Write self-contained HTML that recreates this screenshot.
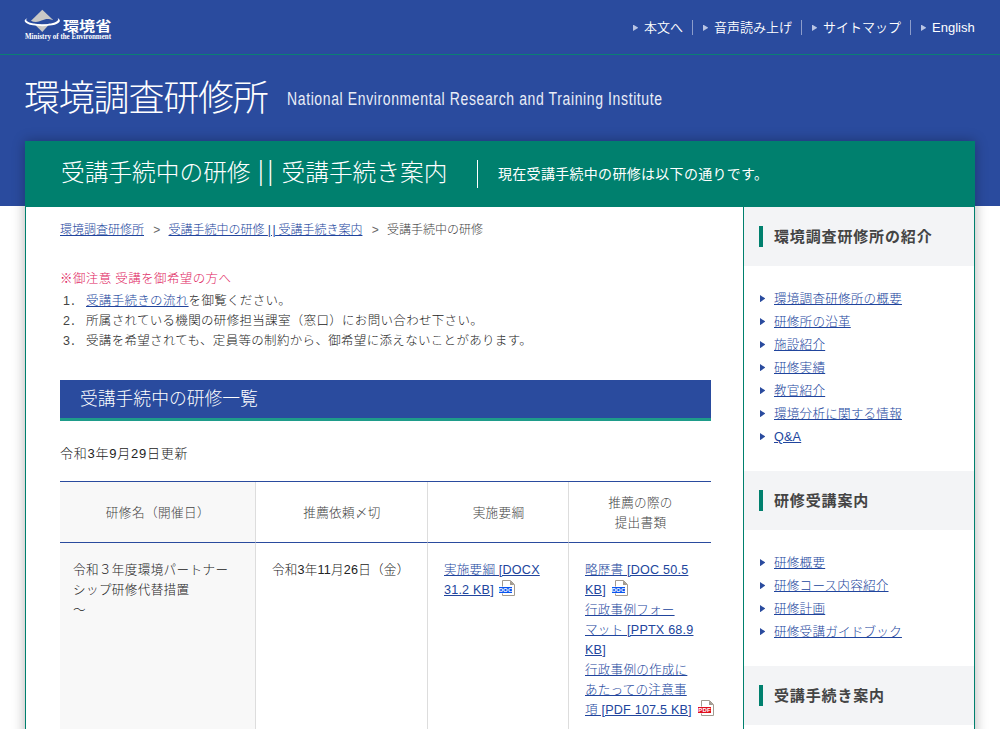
<!DOCTYPE html>
<html lang="ja">
<head>
<meta charset="utf-8">
<title>受講手続中の研修 || 受講手続き案内</title>
<style>
*{box-sizing:border-box;margin:0;padding:0}
html,body{width:1000px;height:729px;overflow:hidden}
body{font-family:"Liberation Sans","Noto Sans CJK JP",sans-serif;font-weight:300;color:#222;background:#fff;position:relative;font-size:13px}
a{color:#21459d;text-decoration:underline}
.abs{position:absolute}
#bluebg{left:0;top:0;width:1000px;height:206px;background:#2a4b9e}
#topline{left:0;top:54px;width:1000px;height:1px;background:#0b7f74}
#logo{left:20px;top:6px;width:50px;height:30px}
#logoj{left:63px;top:15px;font-size:13.2px;line-height:24px;font-weight:700;color:#fff;white-space:nowrap;transform-origin:0 50%;transform:scaleX(1.22)}
#logoe{left:25px;top:32px;font-size:8.2px;line-height:10px;font-weight:700;color:#fff;white-space:nowrap;transform-origin:0 50%;transform:scaleX(0.855);font-family:"Liberation Serif",serif}
#nav{left:0;top:0;width:1000px;height:54px;font-size:13px;color:#fff;white-space:nowrap;line-height:18px;font-weight:350}
#nav span.it{position:absolute;top:19px;padding-left:11px}
#nav span.it:before{content:"";position:absolute;left:0;top:5.5px;width:5.4px;height:6.6px;background:#b9c4e4;clip-path:polygon(0 0,100% 50%,0 100%)}
#nav span.sep{position:absolute;top:20px;width:1px;height:15px;background:#8c9dcb}
#title{left:24px;top:74px;font-size:36px;line-height:50px;color:#fff;font-weight:300;white-space:nowrap;letter-spacing:-1.2px}
#subtitle{left:287px;top:88px;font-size:17.5px;line-height:22px;color:#e9edf7;white-space:nowrap;transform-origin:0 50%;transform:scaleX(0.8);letter-spacing:0.77px;font-weight:400}
#wrap{left:25px;top:141px;width:950px;height:600px;background:#fff;border-left:1px solid #00806e;border-right:1px solid #00806e;box-shadow:0 0 12px rgba(0,0,0,0.3)}
#banner{left:26px;top:141px;width:948px;height:66px;background:#00806e}
#btitle{left:61px;top:155px;font-size:23.7px;line-height:36px;color:#fff;white-space:nowrap;font-weight:300}
#btitle .bars{display:inline-block;width:28.5px;text-align:center;letter-spacing:8.8px;font-size:27px;line-height:20px;transform:scaleX(0.6);margin-left:2px;margin-right:0.5px;white-space:nowrap;vertical-align:1px}
#bsep{left:477px;top:160px;width:1px;height:28px;background:#fff}
#bsub{left:498px;top:163px;font-size:14px;line-height:22px;color:#fff;white-space:nowrap;font-weight:400;letter-spacing:0.3px}
#side{left:743px;top:207px;width:231px;height:540px;border-left:1px solid #00806e;background:#fff}
.sh{position:absolute;left:0;width:230px;height:59px;background:#f3f4f6}
.sh i{position:absolute;left:15px;top:19px;width:4px;height:21px;background:#00806e}
.sh b{position:absolute;left:30px;top:18px;font-size:15px;line-height:24px;font-weight:700;color:#444;white-space:nowrap;letter-spacing:0.85px}
.sl{position:absolute;left:30px;font-size:12.6px;line-height:20px;white-space:nowrap;letter-spacing:0.2px;margin-top:1px}
.sl:before{content:"";position:absolute;left:-14px;top:6px;width:5.4px;height:7.2px;background:#2a4b9e;clip-path:polygon(0 0,100% 50%,0 100%)}
#bc{left:60px;top:220px;font-size:12px;line-height:20px;white-space:nowrap;color:#444}
#bc .gt{display:inline-block;width:24.5px;text-align:center;color:#666;padding-left:1px}
#bc .bb{letter-spacing:1.5px;margin-right:-2px;margin-left:0}
#note{left:60px;top:269px;font-size:12.5px;line-height:20px;color:#e0245e;white-space:nowrap;letter-spacing:0.38px}
.li{position:absolute;left:86px;font-size:12.5px;line-height:20px;white-space:nowrap;color:#222;letter-spacing:0.32px}
.li i{position:absolute;left:-23px;top:0;font-style:normal;color:#444}
#h2{left:60px;top:380px;width:651px;height:41px;background:#2a4b9e;border-bottom:3px solid #1e9c8a}
#h2 span{position:absolute;left:20px;top:5px;font-size:17.8px;line-height:28px;color:#fff;font-weight:300;white-space:nowrap}
#upd{left:60px;top:443px;font-size:13px;line-height:22px;white-space:nowrap;color:#222;letter-spacing:0.75px}
#tbl{left:60px;top:481px;width:651px;height:260px;border-top:1px solid #2a4b9e}
.th{position:absolute;top:0;height:61px;border-bottom:1px solid #2a4b9e;font-size:12.6px;letter-spacing:0.3px;line-height:20px;text-align:center;color:#444}
.td{position:absolute;top:61px;height:200px;font-size:12.6px;letter-spacing:0.2px;line-height:20px;padding:17px 0 0 16px;color:#222;white-space:nowrap}
.ico{position:absolute;width:16px;height:16px}
.ico text{font-family:"Liberation Sans",sans-serif;font-weight:700;font-size:6px;fill:#fff;letter-spacing:0.1px}
.c1{left:0;width:196px;background:#f8f8f8;border-right:1px solid #ddd}
.c2{left:196px;width:172px;border-right:1px solid #ddd}
.c3{left:368px;width:141px;border-right:1px solid #ddd}
.c4{left:509px;width:142px}
</style>
</head>
<body>
<div id="bluebg" class="abs"></div>
<div id="topline" class="abs"></div>
<svg id="logo" class="abs" viewBox="20 6 50 30">
<path d="M42.3 9.8L53.1 20L42.3 31.9L31 20.8Z" fill="#c9c8c6"/>
<path d="M31 20.9C35 22.6 38.5 22 41.5 20.6C44.5 19.2 47 18.6 50 19.2C51.5 19.5 52.5 19.9 53.3 20.3L56 22.5L42 25L29 23Z" fill="#2a4b9e"/>
<path d="M27.4 18.2C22.5 20 24 23.6 33 25.3C39 26.4 46 26.4 52 25.3C60.5 23.6 62 20 57.2 17.7C60 20 56.5 22.4 51 23.4C45 24.5 39 24.5 33.5 23.5C27 22.3 24.6 20 27.4 18.2Z" fill="#fff"/>
</svg>
<div id="logoj" class="abs">環境省</div>
<div id="logoe" class="abs">Ministry of the Environment</div>
<div id="nav" class="abs"><span class="it" style="left:633px">本文へ</span><span class="sep" style="left:692px"></span><span class="it" style="left:703px">音声読み上げ</span><span class="sep" style="left:801px"></span><span class="it" style="left:812px">サイトマップ</span><span class="sep" style="left:910px"></span><span class="it" style="left:921px">English</span></div>
<div id="title" class="abs">環境調査研修所</div>
<div id="subtitle" class="abs">National Environmental Research and Training Institute</div>
<div id="wrap" class="abs"></div>
<div id="banner" class="abs"></div>
<div id="btitle" class="abs">受講手続中の研修<span class="bars"> || </span>受講手続き案内</div>
<div id="bsep" class="abs"></div>
<div id="bsub" class="abs">現在受講手続中の研修は以下の通りです。</div>

<div id="bc" class="abs"><a href="#">環境調査研修所</a><span class="gt">&gt;</span><a href="#">受講手続中の研修 <span class="bb">||</span> 受講手続き案内</a><span class="gt">&gt;</span>受講手続中の研修</div>
<div id="note" class="abs">※御注意 受講を御希望の方へ</div>
<div class="li" style="top:291px"><i>1．</i><a href="#">受講手続きの流れ</a>を御覧ください。</div>
<div class="li" style="top:311px"><i>2．</i>所属されている機関の研修担当課室（窓口）にお問い合わせ下さい。</div>
<div class="li" style="top:331px"><i>3．</i>受講を希望されても、定員等の制約から、御希望に添えないことがあります。</div>
<div id="h2" class="abs"><span>受講手続中の研修一覧</span></div>
<div id="upd" class="abs">令和3年9月29日更新</div>

<div id="tbl" class="abs">
<div class="th c1" style="padding-top:21px;padding-left:1px;letter-spacing:0.45px">研修名（開催日）</div>
<div class="th c2" style="padding-top:21px;padding-left:1px">推薦依頼〆切</div>
<div class="th c3" style="padding-top:21px;padding-left:1px">実施要綱</div>
<div class="th c4" style="padding-top:11px;padding-left:1px">推薦の際の<br>提出書類</div>
<div class="td c1" style="padding-left:13px;letter-spacing:0.35px">令和３年度環境パートナー<br>シップ研修代替措置<br>～</div>
<div class="td c2">令和3年11月26日（金）</div>
<div class="td c3"><a href="#">実施要綱 [DOCX<br>31.2 KB]</a></div>
<div class="td c4"><a href="#">略歴書 [DOC 50.5<br>KB]</a><br><a href="#">行政事例フォー<br>マット [PPTX 68.9<br>KB]</a><br><a href="#">行政事例の作成に<br>あたっての注意事<br>項 [PDF 107.5 KB]</a></div>
<svg class="ico" style="left:439px;top:98px" viewBox="0 0 16 16"><path d="M3.5 6.5V0.5H11.5L15.5 4.5V15.5H3.5V13.5" fill="#fff" stroke="#a29a90" stroke-width="1"/><path d="M11 0.5V5H15.5Z" fill="#a29a90"/><rect x="0" y="7" width="13" height="6" fill="#0a55f0"/><text x="6.5" y="12" text-anchor="middle">DOC</text></svg>
<svg class="ico" style="left:552px;top:98px" viewBox="0 0 16 16"><path d="M3.5 6.5V0.5H11.5L15.5 4.5V15.5H3.5V13.5" fill="#fff" stroke="#a29a90" stroke-width="1"/><path d="M11 0.5V5H15.5Z" fill="#a29a90"/><rect x="0" y="7" width="13" height="6" fill="#0a55f0"/><text x="6.5" y="12" text-anchor="middle">DOC</text></svg>
<svg class="ico" style="left:638px;top:218px" viewBox="0 0 16 16"><path d="M3.5 6.5V0.5H11.5L15.5 4.5V15.5H3.5V13.5" fill="#fff" stroke="#a29a90" stroke-width="1"/><path d="M11 0.5V5H15.5Z" fill="#a29a90"/><rect x="0" y="7" width="13" height="6" fill="#e01020"/><text x="6.5" y="12" text-anchor="middle">PDF</text></svg>
</div>

<div id="side" class="abs">
<div class="sh" style="top:0"><i></i><b>環境調査研修所の紹介</b></div>
<a href="#" class="sl" style="top:81px">環境調査研修所の概要</a>
<a href="#" class="sl" style="top:104px">研修所の沿革</a>
<a href="#" class="sl" style="top:127px">施設紹介</a>
<a href="#" class="sl" style="top:150px">研修実績</a>
<a href="#" class="sl" style="top:173px">教官紹介</a>
<a href="#" class="sl" style="top:196px">環境分析に関する情報</a>
<a href="#" class="sl" style="top:219px">Q&amp;A</a>
<div class="sh" style="top:264px"><i></i><b>研修受講案内</b></div>
<a href="#" class="sl" style="top:345px">研修概要</a>
<a href="#" class="sl" style="top:368px">研修コース内容紹介</a>
<a href="#" class="sl" style="top:391px">研修計画</a>
<a href="#" class="sl" style="top:414px">研修受講ガイドブック</a>
<div class="sh" style="top:459px"><i></i><b>受講手続き案内</b></div>
</div>
</body>
</html>
